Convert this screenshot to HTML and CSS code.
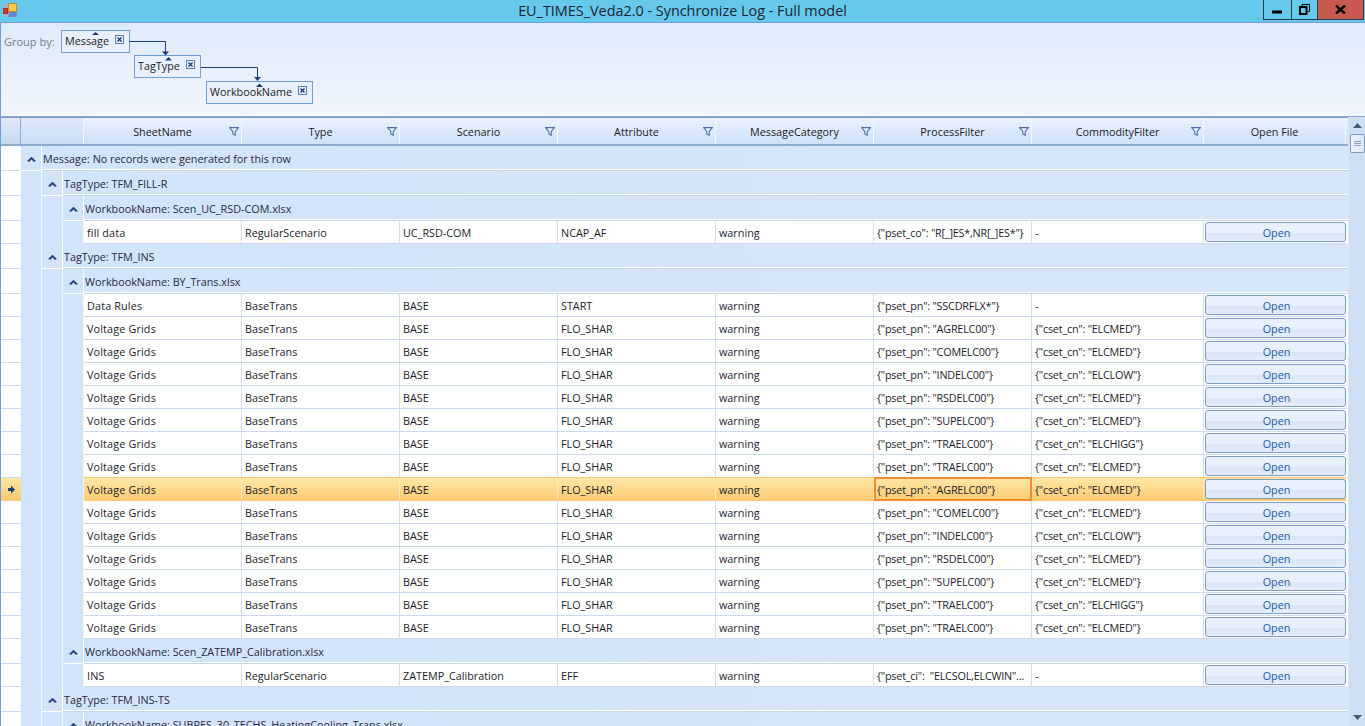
FILE: index.html
```html
<!DOCTYPE html>
<html>
<head>
  <title>EU_TIMES_Veda2.0 - Synchronize Log - Full model</title>
  <link rel="stylesheet" href="styles.css">
</head>
<body>

  <svg class="icon-defs">
    <symbol id="chevron" viewBox="0 0 9 6"><path d="M0.5 5 L4.5 1 L8.5 5 L6.8 5.4 L4.5 3.2 L2.2 5.4 Z" fill="#1c3f78" stroke="#1c3f78" stroke-width="0.5"/></symbol>
    <symbol id="funnel" viewBox="0 0 10 9"><path d="M0.6 0.6 H9.4 L6.2 4.4 V8.2 L3.8 7 V4.4 Z" fill="#eef4fd" stroke="#4d6fa3" stroke-width="1.1"/></symbol>
    <symbol id="remove" viewBox="0 0 9 9"><rect x="0.5" y="0.5" width="8" height="8" fill="#e4edfa" stroke="#5f82b5"/><path d="M2.5 2.5 L6.5 6.5 M6.5 2.5 L2.5 6.5" stroke="#1c3f78" stroke-width="1.4"/></symbol>
  </svg>

  <div class="window">

    <div class="title-bar">
      <svg class="app-icon" width="15" height="15" viewBox="0 0 15 15">
        <rect x="0.5" y="0.5" width="13" height="13" fill="#9fb6c4"/>
        <rect x="5.5" y="0.5" width="8" height="8" fill="#fbc94b" stroke="#b58a3a"/>
        <rect x="0.5" y="5.5" width="4" height="5" fill="#d8342c" stroke="#a33"/>
        <rect x="6" y="9.5" width="7" height="4" fill="#5b8be0" stroke="#6f86b0"/>
      </svg>
      <div class="title-text">EU_TIMES_Veda2.0 - Synchronize Log - Full model</div>
      <div class="window-buttons">
        <div class="win-btn win-min"><svg width="11" height="4" viewBox="0 0 11 4"><rect y="0.5" width="10" height="3" fill="#000"/></svg></div>
        <div class="win-btn win-max"><svg width="11" height="11" viewBox="0 0 11 11"><path d="M3 2.5 V0.5 H10.5 V7.5 H8.5" fill="none" stroke="#000"/><rect x="1" y="3" width="6.5" height="7" fill="none" stroke="#000" stroke-width="2"/></svg></div>
        <div class="win-btn win-close"><svg width="11" height="9" viewBox="0 0 11 9"><path d="M1 0.5 L10 8.5 M10 0.5 L1 8.5" stroke="#000" stroke-width="2.4"/></svg></div>
      </div>
    </div>

    <div class="group-panel">
      <div class="group-label-text">Group by:</div>
      <div class="chip chip-message">
        <span>Message</span>
        <svg class="chip-x"><use href="#remove"/></svg>
      </div>
      <div class="chip chip-tag">
        <span>TagType</span>
        <svg class="chip-x"><use href="#remove"/></svg>
      </div>
      <div class="chip chip-workbook">
        <span>WorkbookName</span>
        <svg class="chip-x"><use href="#remove"/></svg>
      </div>
      <svg class="connectors" width="320" height="94" viewBox="0 0 320 94">
        <g fill="none" stroke="#1c3f78" stroke-width="1">
          <path d="M129 18.5 H165.5 V29"/>
          <path d="M201 44.5 H257.5 V54"/>
        </g>
        <g fill="#1c3f78">
          <path d="M162 28.5 H169 L165.5 32.5 Z"/>
          <path d="M254 54 H261 L257.5 58 Z"/>
          <path d="M92 12 H99 L95.5 9 Z"/>
          <path d="M165 37.5 H172 L168.5 34 Z"/>
          <path d="M256 64 H263 L259.5 60.5 Z"/>
        </g>
      </svg>
    </div>

    <div class="grid-area">
      <div class="grid">

        <div class="header-row">
          <div class="header-selector"></div>
          <div class="header-indent"></div>
          <div class="columns">
            <div class="header-cell">SheetName<svg class="funnel"><use href="#funnel"/></svg></div>
            <div class="header-cell">Type<svg class="funnel"><use href="#funnel"/></svg></div>
            <div class="header-cell">Scenario<svg class="funnel"><use href="#funnel"/></svg></div>
            <div class="header-cell">Attribute<svg class="funnel"><use href="#funnel"/></svg></div>
            <div class="header-cell">MessageCategory<svg class="funnel"><use href="#funnel"/></svg></div>
            <div class="header-cell">ProcessFilter<svg class="funnel"><use href="#funnel"/></svg></div>
            <div class="header-cell">CommodityFilter<svg class="funnel"><use href="#funnel"/></svg></div>
            <div class="header-cell">Open File</div>
          </div>
        </div>

        <div class="row group-row">
          <div class="selector"></div>
          <div class="expander"><svg class="chevron"><use href="#chevron"/></svg></div>
          <div class="group-title">Message: No records were generated for this row</div>
        </div>

        <div class="row group-row">
          <div class="selector"></div>
          <div class="indent"></div>
          <div class="expander"><svg class="chevron"><use href="#chevron"/></svg></div>
          <div class="group-title">TagType: TFM_FILL-R</div>
        </div>

        <div class="row group-row">
          <div class="selector"></div>
          <div class="indent"></div>
          <div class="indent"></div>
          <div class="expander"><svg class="chevron"><use href="#chevron"/></svg></div>
          <div class="group-title">WorkbookName: Scen_UC_RSD-COM.xlsx</div>
        </div>

        <div class="row data-row">
          <div class="selector"></div>
          <div class="indent"></div><div class="indent"></div><div class="indent"></div>
          <div class="columns">
            <div class="cell">fill data</div><div class="cell">RegularScenario</div><div class="cell">UC_RSD-COM</div><div class="cell">NCAP_AF</div><div class="cell">warning</div>
            <div class="cell">{"pset_co": "R[_]ES*,NR[_]ES*"}</div><div class="cell">-</div>
            <div class="cell-button"><button type="button">Open</button></div>
          </div>
        </div>

        <div class="row group-row">
          <div class="selector"></div>
          <div class="indent"></div>
          <div class="expander"><svg class="chevron"><use href="#chevron"/></svg></div>
          <div class="group-title">TagType: TFM_INS</div>
        </div>

        <div class="row group-row">
          <div class="selector"></div>
          <div class="indent"></div>
          <div class="indent"></div>
          <div class="expander"><svg class="chevron"><use href="#chevron"/></svg></div>
          <div class="group-title">WorkbookName: BY_Trans.xlsx</div>
        </div>

        <div class="row data-row">
          <div class="selector"></div>
          <div class="indent"></div><div class="indent"></div><div class="indent"></div>
          <div class="columns">
            <div class="cell">Data Rules</div><div class="cell">BaseTrans</div><div class="cell">BASE</div><div class="cell">START</div><div class="cell">warning</div>
            <div class="cell">{"pset_pn": "SSCDRFLX*"}</div><div class="cell">-</div>
            <div class="cell-button"><button type="button">Open</button></div>
          </div>
        </div>

        <div class="row data-row">
          <div class="selector"></div>
          <div class="indent"></div><div class="indent"></div><div class="indent"></div>
          <div class="columns">
            <div class="cell">Voltage Grids</div><div class="cell">BaseTrans</div><div class="cell">BASE</div><div class="cell">FLO_SHAR</div><div class="cell">warning</div>
            <div class="cell">{"pset_pn": "AGRELC00"}</div><div class="cell">{"cset_cn": "ELCMED"}</div>
            <div class="cell-button"><button type="button">Open</button></div>
          </div>
        </div>

        <div class="row data-row">
          <div class="selector"></div>
          <div class="indent"></div><div class="indent"></div><div class="indent"></div>
          <div class="columns">
            <div class="cell">Voltage Grids</div><div class="cell">BaseTrans</div><div class="cell">BASE</div><div class="cell">FLO_SHAR</div><div class="cell">warning</div>
            <div class="cell">{"pset_pn": "COMELC00"}</div><div class="cell">{"cset_cn": "ELCMED"}</div>
            <div class="cell-button"><button type="button">Open</button></div>
          </div>
        </div>

        <div class="row data-row">
          <div class="selector"></div>
          <div class="indent"></div><div class="indent"></div><div class="indent"></div>
          <div class="columns">
            <div class="cell">Voltage Grids</div><div class="cell">BaseTrans</div><div class="cell">BASE</div><div class="cell">FLO_SHAR</div><div class="cell">warning</div>
            <div class="cell">{"pset_pn": "INDELC00"}</div><div class="cell">{"cset_cn": "ELCLOW"}</div>
            <div class="cell-button"><button type="button">Open</button></div>
          </div>
        </div>

        <div class="row data-row">
          <div class="selector"></div>
          <div class="indent"></div><div class="indent"></div><div class="indent"></div>
          <div class="columns">
            <div class="cell">Voltage Grids</div><div class="cell">BaseTrans</div><div class="cell">BASE</div><div class="cell">FLO_SHAR</div><div class="cell">warning</div>
            <div class="cell">{"pset_pn": "RSDELC00"}</div><div class="cell">{"cset_cn": "ELCMED"}</div>
            <div class="cell-button"><button type="button">Open</button></div>
          </div>
        </div>

        <div class="row data-row">
          <div class="selector"></div>
          <div class="indent"></div><div class="indent"></div><div class="indent"></div>
          <div class="columns">
            <div class="cell">Voltage Grids</div><div class="cell">BaseTrans</div><div class="cell">BASE</div><div class="cell">FLO_SHAR</div><div class="cell">warning</div>
            <div class="cell">{"pset_pn": "SUPELC00"}</div><div class="cell">{"cset_cn": "ELCMED"}</div>
            <div class="cell-button"><button type="button">Open</button></div>
          </div>
        </div>

        <div class="row data-row">
          <div class="selector"></div>
          <div class="indent"></div><div class="indent"></div><div class="indent"></div>
          <div class="columns">
            <div class="cell">Voltage Grids</div><div class="cell">BaseTrans</div><div class="cell">BASE</div><div class="cell">FLO_SHAR</div><div class="cell">warning</div>
            <div class="cell">{"pset_pn": "TRAELC00"}</div><div class="cell">{"cset_cn": "ELCHIGG"}</div>
            <div class="cell-button"><button type="button">Open</button></div>
          </div>
        </div>

        <div class="row data-row">
          <div class="selector"></div>
          <div class="indent"></div><div class="indent"></div><div class="indent"></div>
          <div class="columns">
            <div class="cell">Voltage Grids</div><div class="cell">BaseTrans</div><div class="cell">BASE</div><div class="cell">FLO_SHAR</div><div class="cell">warning</div>
            <div class="cell">{"pset_pn": "TRAELC00"}</div><div class="cell">{"cset_cn": "ELCMED"}</div>
            <div class="cell-button"><button type="button">Open</button></div>
          </div>
        </div>

        <div class="row data-row selected">
          <div class="selector"><svg width="7" height="9" viewBox="0 0 7 9"><path d="M0 3 H3 V0.5 L7 4.5 L3 8.5 V6 H0 Z" fill="#1c3f78"/></svg></div>
          <div class="indent"></div><div class="indent"></div><div class="indent"></div>
          <div class="columns">
            <div class="cell">Voltage Grids</div><div class="cell">BaseTrans</div><div class="cell">BASE</div><div class="cell">FLO_SHAR</div><div class="cell">warning</div>
            <div class="cell current">{"pset_pn": "AGRELC00"}</div><div class="cell">{"cset_cn": "ELCMED"}</div>
            <div class="cell-button"><button type="button">Open</button></div>
          </div>
        </div>

        <div class="row data-row">
          <div class="selector"></div>
          <div class="indent"></div><div class="indent"></div><div class="indent"></div>
          <div class="columns">
            <div class="cell">Voltage Grids</div><div class="cell">BaseTrans</div><div class="cell">BASE</div><div class="cell">FLO_SHAR</div><div class="cell">warning</div>
            <div class="cell">{"pset_pn": "COMELC00"}</div><div class="cell">{"cset_cn": "ELCMED"}</div>
            <div class="cell-button"><button type="button">Open</button></div>
          </div>
        </div>

        <div class="row data-row">
          <div class="selector"></div>
          <div class="indent"></div><div class="indent"></div><div class="indent"></div>
          <div class="columns">
            <div class="cell">Voltage Grids</div><div class="cell">BaseTrans</div><div class="cell">BASE</div><div class="cell">FLO_SHAR</div><div class="cell">warning</div>
            <div class="cell">{"pset_pn": "INDELC00"}</div><div class="cell">{"cset_cn": "ELCLOW"}</div>
            <div class="cell-button"><button type="button">Open</button></div>
          </div>
        </div>

        <div class="row data-row">
          <div class="selector"></div>
          <div class="indent"></div><div class="indent"></div><div class="indent"></div>
          <div class="columns">
            <div class="cell">Voltage Grids</div><div class="cell">BaseTrans</div><div class="cell">BASE</div><div class="cell">FLO_SHAR</div><div class="cell">warning</div>
            <div class="cell">{"pset_pn": "RSDELC00"}</div><div class="cell">{"cset_cn": "ELCMED"}</div>
            <div class="cell-button"><button type="button">Open</button></div>
          </div>
        </div>

        <div class="row data-row">
          <div class="selector"></div>
          <div class="indent"></div><div class="indent"></div><div class="indent"></div>
          <div class="columns">
            <div class="cell">Voltage Grids</div><div class="cell">BaseTrans</div><div class="cell">BASE</div><div class="cell">FLO_SHAR</div><div class="cell">warning</div>
            <div class="cell">{"pset_pn": "SUPELC00"}</div><div class="cell">{"cset_cn": "ELCMED"}</div>
            <div class="cell-button"><button type="button">Open</button></div>
          </div>
        </div>

        <div class="row data-row">
          <div class="selector"></div>
          <div class="indent"></div><div class="indent"></div><div class="indent"></div>
          <div class="columns">
            <div class="cell">Voltage Grids</div><div class="cell">BaseTrans</div><div class="cell">BASE</div><div class="cell">FLO_SHAR</div><div class="cell">warning</div>
            <div class="cell">{"pset_pn": "TRAELC00"}</div><div class="cell">{"cset_cn": "ELCHIGG"}</div>
            <div class="cell-button"><button type="button">Open</button></div>
          </div>
        </div>

        <div class="row data-row">
          <div class="selector"></div>
          <div class="indent"></div><div class="indent"></div><div class="indent"></div>
          <div class="columns">
            <div class="cell">Voltage Grids</div><div class="cell">BaseTrans</div><div class="cell">BASE</div><div class="cell">FLO_SHAR</div><div class="cell">warning</div>
            <div class="cell">{"pset_pn": "TRAELC00"}</div><div class="cell">{"cset_cn": "ELCMED"}</div>
            <div class="cell-button"><button type="button">Open</button></div>
          </div>
        </div>

        <div class="row group-row">
          <div class="selector"></div>
          <div class="indent"></div>
          <div class="indent"></div>
          <div class="expander"><svg class="chevron"><use href="#chevron"/></svg></div>
          <div class="group-title">WorkbookName: Scen_ZATEMP_Calibration.xlsx</div>
        </div>

        <div class="row data-row">
          <div class="selector"></div>
          <div class="indent"></div><div class="indent"></div><div class="indent"></div>
          <div class="columns">
            <div class="cell">INS</div><div class="cell">RegularScenario</div><div class="cell">ZATEMP_Calibration</div><div class="cell">EFF</div><div class="cell">warning</div>
            <div class="cell">{"pset_ci": &nbsp;"ELCSOL,ELCWIN"...</div><div class="cell">-</div>
            <div class="cell-button"><button type="button">Open</button></div>
          </div>
        </div>

        <div class="row group-row">
          <div class="selector"></div>
          <div class="indent"></div>
          <div class="expander"><svg class="chevron"><use href="#chevron"/></svg></div>
          <div class="group-title">TagType: TFM_INS-TS</div>
        </div>

        <div class="row group-row">
          <div class="selector"></div>
          <div class="indent"></div>
          <div class="indent"></div>
          <div class="expander"><svg class="chevron"><use href="#chevron"/></svg></div>
          <div class="group-title">WorkbookName: SUBRES_30_TECHS_HeatingCooling_Trans.xlsx</div>
        </div>

      </div>

      <div class="scrollbar">
        <div class="scroll-arrow"><svg width="9" height="5" viewBox="0 0 9 5"><path d="M0 5 L4.5 0 L9 5 Z" fill="#4a5a70"/></svg></div>
        <div class="scroll-thumb"><span></span><span></span><span></span></div>
        <div class="scroll-track"></div>
        <div class="scroll-arrow"><svg width="9" height="5" viewBox="0 0 9 5"><path d="M0 0 L4.5 5 L9 0 Z" fill="#4a5a70"/></svg></div>
      </div>
    </div>

  </div>

</body>
</html>
```

FILE: styles.css
```css
body {
  font-family: "Open Sans", "Noto Sans", sans-serif;
  font-size: 10.8px;
  color: #1d1d2c;
  margin: 0;
  padding: 0;
  overflow: hidden;
}

.icon-defs {
  display: none;
}

.window {
  height: 726px;
  display: flex;
  flex-direction: column;
  overflow: hidden;
  background-color: #66c9ec;
}

/* title bar */

.title-bar {
  height: 22px;
  flex: none;
  display: flex;
  position: relative;
  background-color: #66c9ec;
  border-bottom: 1px solid #6f9fd8;
}

.app-icon {
  margin: 3px 0 0 3px;
}

.title-text {
  position: absolute;
  top: 1px;
  left: 0;
  right: 0;
  text-align: center;
  font-size: 14.4px;
  line-height: 20px;
  color: #1a2630;
}

.window-buttons {
  margin-left: auto;
  margin-right: 1px;
  height: 19px;
  display: flex;
  border: 1px solid #2a3a44;
  border-top: none;
  z-index: 1;
}

.win-btn {
  display: flex;
  align-items: center;
  justify-content: center;
  border-right: 1px solid #2a3a44;
}

.win-min {
  width: 27px;
}

.win-min svg {
  margin-top: 4px;
}

.win-max {
  width: 25px;
}

.win-close {
  width: 45px;
  border-right: none;
  background-color: #c75b50;
}

/* group by panel */

.group-panel {
  height: 94px;
  flex: none;
  position: relative;
  box-sizing: border-box;
  padding: 7px 0 0 60px;
  background: linear-gradient(#deebfa, #f1f5fe);
  border-left: 1px solid #6f9fd8;
  border-bottom: 1px solid #8eaacd;
}

.group-label-text {
  position: absolute;
  left: 3px;
  top: 11px;
  color: #73808f;
  font-size: 11px;
  line-height: 15px;
}

.chip {
  width: fit-content;
  height: 23px;
  box-sizing: border-box;
  display: flex;
  align-items: center;
  gap: 6px;
  padding: 0 5px 0 3px;
  background-color: #e7f0fc;
  border: 1px solid #6f9fd8;
  color: #1d1d2c;
}

.chip span {
  padding-bottom: 2px;
}

.chip-tag {
  margin: 2px 0 0 73px;
}

.chip-workbook {
  margin: 3px 0 0 145px;
}

.chip-x {
  width: 9px;
  height: 9px;
  margin-top: -4px;
}

.connectors {
  position: absolute;
  left: -1px;
  top: 0;
}

/* grid */

.grid-area {
  flex: 1;
  min-height: 0;
  display: flex;
  background-color: #fff;
  border-left: 1px solid #6f9fd8;
}

.grid {
  width: 1347px;
  flex: none;
  overflow: hidden;
}

.header-row {
  height: 29px;
  display: flex;
  box-sizing: border-box;
  border-top: 1px solid #7f9cc3;
  border-bottom: 2px solid #8eaacd;
  background: linear-gradient(#eaf2fd, #cddff8);
}

.header-selector {
  width: 19px;
  border-right: 1px solid #8eaacd;
  background: linear-gradient(#dfe9f7, #c6d9f2);
}

.header-indent {
  width: 62px;
  border-right: 1px solid #f4f8fe;
  background: linear-gradient(#dce8f8, #cbdef8);
}

.columns {
  display: grid;
  grid-template-columns: repeat(6, 158px) 172px 142px;
}

.header-cell {
  position: relative;
  display: flex;
  align-items: center;
  justify-content: center;
  box-sizing: border-box;
  border-right: 1px solid #f4f8fe;
  color: #1d1d2c;
}

.funnel {
  position: absolute;
  right: 2px;
  top: 9px;
  width: 10px;
  height: 9px;
}

.row {
  display: flex;
}

.selector {
  width: 20px;
  flex: none;
  display: flex;
  align-items: center;
  justify-content: center;
  background-color: #fff;
  border-bottom: 1px solid #cbdcf2;
  box-sizing: border-box;
}

.indent {
  width: 21px;
  flex: none;
  box-sizing: border-box;
  background-color: #d2e4fb;
  border-right: 1px solid #eef4fc;
}

.group-row {
  height: 25px;
}

.group-row .selector {
  height: 25px;
}

.expander {
  width: 20px;
  flex: none;
  margin-bottom: 1px;
  padding-top: 1px;
  box-sizing: content-box;
  height: 23px;
  display: flex;
  align-items: center;
  justify-content: center;
  background-color: #d3e3f8;
  border-right: 1px solid #fff;
}

.chevron {
  width: 9px;
  height: 6px;
}

.group-title {
  flex: 1;
  height: 23px;
  margin-bottom: 1px;
  padding-left: 1px;
  line-height: 25px;
  overflow: hidden;
  white-space: nowrap;
  background: linear-gradient(90deg, #d2e4fb, #d6e5f8 60%);
  border-bottom: 1px solid #fff;
  box-shadow: 0 1px 0 #c5d5e8;
  color: #2a2a40;
}

.data-row {
  height: 23px;
}

.data-row .columns {
  height: 22px;
  background-color: #fff;
  border-bottom: 1px solid #cbdaee;
}

.cell {
  height: 22px;
  box-sizing: border-box;
  padding-left: 3px;
  line-height: 24px;
  white-space: nowrap;
  overflow: hidden;
  border-right: 1px solid #d3e0f2;
}

/* the filter columns run tighter than the name column */
.cell:nth-child(1) {
  letter-spacing: 0.15px;
}

.cell:nth-child(6),
.cell:nth-child(7) {
  letter-spacing: -0.2px;
}

.cell-button {
  padding: 1px 0 1px 1px;
  display: flex;
}

.cell-button button {
  width: 100%;
  height: 20px;
  padding: 1px 0 0 2px;
  margin: 0;
  font-family: "Open Sans", "Noto Sans", sans-serif;
  font-size: 10.8px;
  color: #1f5aa6;
  background: linear-gradient(#e8f0fc 55%, #d9e5f5 55%, #e3ecf9);
  border: 1px solid #7f9cc3;
  border-radius: 3px;
}

.selected .selector {
  background: linear-gradient(#ffe7a4, #fdc86e);
  border-bottom-color: #f9c874;
}

.selected .columns {
  background: linear-gradient(#ffe8a8, #fecb72);
  border-top: 1px solid #f9c874;
  border-bottom-color: #f9c874;
  margin-top: -1px;
}

.selected .cell {
  border-right-color: #fde9b8;
}

.cell.current {
  height: 24px;
  margin: -1px 0;
  border: 2px solid #f08c32;
  line-height: 22px;
  padding-left: 1px;
}

/* scrollbar */

.scrollbar {
  flex: 1;
  display: flex;
  flex-direction: column;
  align-items: center;
  background-color: #cfdff3;
  border-left: 1px solid #dbe6f5;
}

.scroll-arrow {
  height: 17px;
  flex: none;
  display: flex;
  align-items: center;
  justify-content: center;
}

.scroll-thumb {
  width: 15px;
  height: 19px;
  flex: none;
  box-sizing: border-box;
  display: flex;
  flex-direction: column;
  align-items: center;
  justify-content: center;
  gap: 1px;
  background: linear-gradient(90deg, #eef4fc, #dbe7f6);
  border: 1px solid #7f9cc3;
  border-radius: 2px;
}

.scroll-thumb span {
  width: 7px;
  height: 1px;
  background-color: #8ea6c6;
}

.scroll-track {
  flex: 1;
}
```
